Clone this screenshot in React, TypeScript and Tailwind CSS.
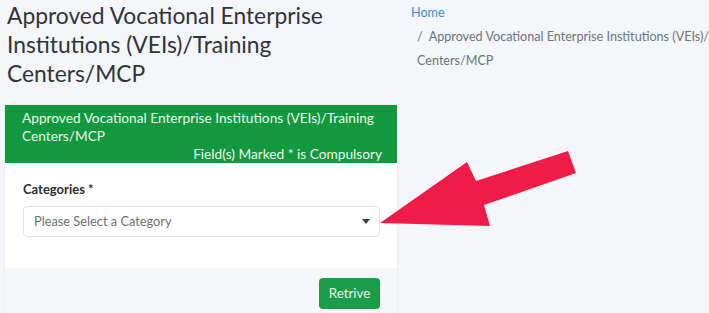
import React from "react";

export default function App() {
  return (
    <div
      className="relative w-[709px] h-[313px] overflow-hidden bg-[#f4f6f9] text-[#2b2f33]"
      style={{ fontFamily: "Lato, 'Liberation Sans', sans-serif" }}
    >
      <div className="flex">
        <div className="w-[403px] shrink-0 pl-[5px]">
          <h1 className="pl-[2px] pt-[1px] text-[22.8px] leading-[29px] text-[#30343a] w-[330px]">
            Approved Vocational Enterprise Institutions (VEIs)/Training Centers/MCP
          </h1>
          <div className="mt-[17px] w-[392px] bg-white shadow-[0_0_1px_rgba(0,0,0,0.2)]">
            <div className="bg-[#12983f] text-[#e9f7ec] pl-[17px] pr-[15px] pt-[4px] pb-[2px] text-[13.7px] leading-[18px] h-[58px]">
              <div>Approved Vocational Enterprise Institutions (VEIs)/Training Centers/MCP</div>
              <div className="text-right">Field(s) Marked * is Compulsory</div>
            </div>
            <div className="px-[18px] pt-[17px] h-[105px]">
              <div className="font-bold text-[13px] leading-[18px] text-[#2b2f33]">Categories *</div>
              <div className="mt-[8px] h-[31px] w-[357px] border border-[#dfe3e8] rounded-[4px] flex items-center justify-between pl-[10px] pr-[8px] text-[12.8px] text-[#6b7078]">
                <span>Please Select a Category</span>
                <svg width="8" height="5" viewBox="0 0 8 5" className="mr-[1px]">
                  <path d="M0 0 L8 0 L4 5 Z" fill="#3a3d42" />
                </svg>
              </div>
            </div>
            <div className="bg-[#f6f7f8] h-[50px] flex justify-end items-start pt-[10px] pr-[17px]">
              <button className="h-[31px] w-[61px] rounded-[4px] bg-[#1b9c48] text-[#e8f7ec] text-[13.3px]">
                Retrive
              </button>
            </div>
          </div>
        </div>
        <div className="pl-[8px] pt-[1px] text-[12.6px] leading-[24px] text-[#6c757d] whitespace-nowrap">
          <div className="text-[#3b8fd4]">Home</div>
          <div className="pl-[6px]">
            <span className="pr-[6px]">/</span>Approved Vocational Enterprise Institutions (VEIs)/Training
          </div>
          <div className="pl-[6px]">Centers/MCP</div>
        </div>
      </div>
      <svg
        className="absolute left-0 top-0 pointer-events-none"
        width="709"
        height="313"
        viewBox="0 0 709 313"
      >
        <polygon
          points="380,223 467,162 476,181 568,151 576,173 484,205 490,226"
          fill="#f01c48"
        />
      </svg>
    </div>
  );
}
